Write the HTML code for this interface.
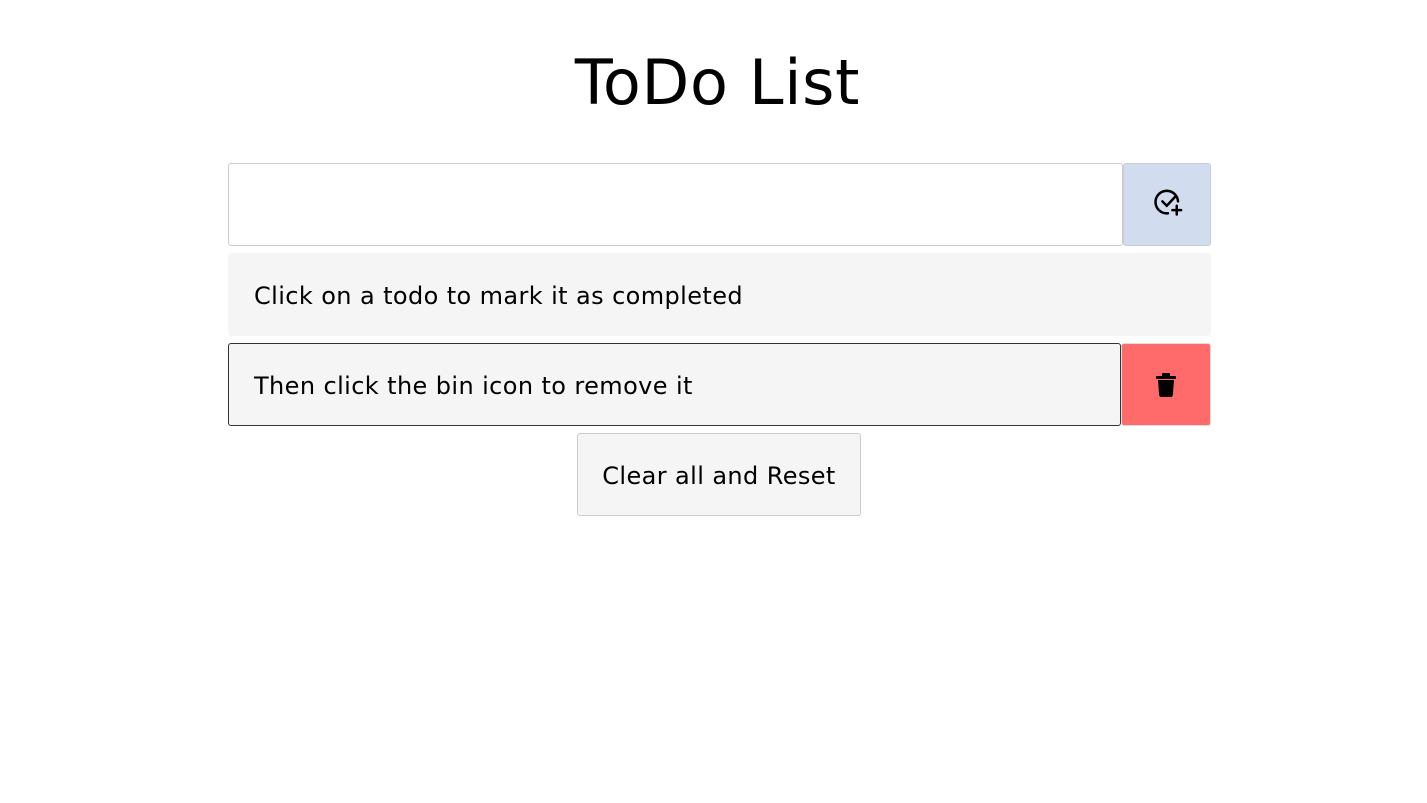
<!DOCTYPE html>
<html><head><style>
body{margin:0;background:#fff;font-family:"DejaVu Sans","Liberation Sans",sans-serif;color:#000;}
h1{position:absolute;top:45px;left:4px;width:1427px;text-align:center;margin:0;font-weight:normal;font-size:62px;letter-spacing:0.7px;line-height:76px;}
.box{position:absolute;box-sizing:border-box;}
.t{font-size:24px;letter-spacing:0.4px;line-height:87px;padding-left:25px;}
</style></head><body>
<h1>ToDo List</h1>
<div class="box" style="left:228px;top:163px;width:895px;height:83px;border:1px solid #ccc;border-radius:3px;"></div>
<div class="box" style="left:1123px;top:163px;width:88px;height:83px;background:#d1ddee;border:1px solid #c8ccd4;border-radius:3px;">
<svg width="30" height="30" viewBox="0 0 24 24" style="position:absolute;left:29px;top:23px" fill="none" stroke="#000" stroke-width="2" stroke-linecap="round"><path d="M20 11.5A9 9 0 1 0 12 21"/><path d="M7.5 11.5l3.5 3.5 7.5-8"/><path d="M19 15v7M15.5 18.5h7"/></svg>
</div>
<div class="box t" style="left:228px;top:253px;width:983px;height:83px;background:#f5f5f5;border-radius:3px;padding-left:26px;">Click on a todo to mark it as completed</div>
<div class="box t" style="left:228px;top:343px;width:893px;height:83px;background:#f5f5f5;border:1px solid #333;border-radius:3px;line-height:85px;">Then click the bin icon to remove it</div>
<div class="box" style="left:1121px;top:343px;width:90px;height:83px;background:#ff6b6b;border:1px solid #ddd;border-radius:3px;">
<svg width="20" height="24" viewBox="0 0 20 24" style="position:absolute;left:34px;top:29px"><rect x="0" y="3" width="20" height="3" rx="1"/><rect x="6" y="0" width="8" height="4" rx="1"/><path d="M2 7h16l-1.2 15.5A2 2 0 0 1 15 24H5a2 2 0 0 1-1.8-1.5z"/></svg>
</div>
<div class="box" style="left:577px;top:433px;width:284px;height:83px;background:#f5f5f5;border:1px solid #ccc;border-radius:3px;text-align:center;font-size:24px;letter-spacing:0.4px;line-height:85px;">Clear all and Reset</div>
</body></html>
